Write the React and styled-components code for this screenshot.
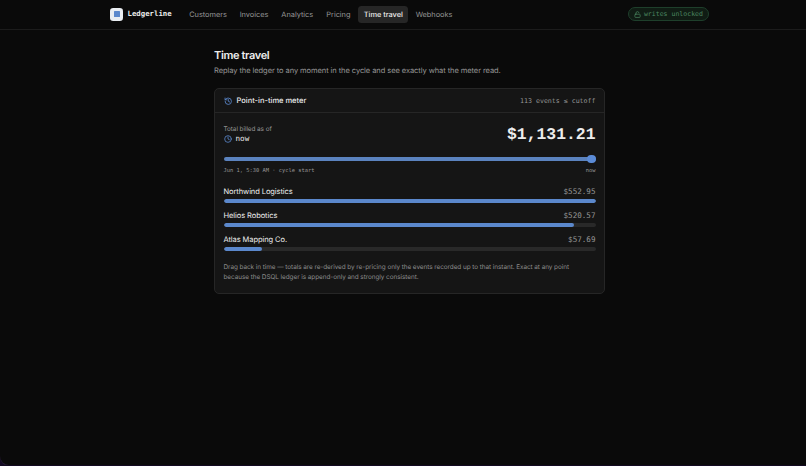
import React, { useState } from 'react'
import styled, { createGlobalStyle } from 'styled-components'
import { Clock, History, LockOpen } from 'lucide-react'

const links = [
  { name: 'Customers', width: 37.5 },
  { name: 'Invoices', width: 28.5 },
  { name: 'Analytics', width: 32 },
  { name: 'Pricing', width: 24.3 },
  { name: 'Time travel', width: 39.5 },
  { name: 'Webhooks', width: 36 },
]

const customers = [
  { name: 'Northwind Logistics', total: 552.95 },
  { name: 'Helios Robotics', total: 520.57 },
  { name: 'Atlas Mapping Co.', total: 57.69 },
]

const App = () => {
  const [active, setActive] = useState('Time travel')
  const max = Math.max(...customers.map((c) => c.total))

  return (
    <>
      <GlobalStyle />
      <Page>
        <Header>
          <Brand>
            <Logo><LogoMark /></Logo>
            <BrandName>Ledgerline</BrandName>
          </Brand>
          <Nav>
            {links.map((link) => (
              <NavLink key={link.name} $width={link.width} $active={active === link.name} onClick={() => setActive(link.name)}>
                {link.name}
              </NavLink>
            ))}
          </Nav>
          <Status>
            <LockOpen size={7} strokeWidth={2.4} />
            writes unlocked
          </Status>
        </Header>

        <Main>
          <Title>Time travel</Title>
          <Subtitle>Replay the ledger to any moment in the cycle and see exactly what the meter read.</Subtitle>

          <Card>
            <CardHeader>
              <CardTitle>
                <History size={8.5} strokeWidth={2.4} />
                Point-in-time meter
              </CardTitle>
              <EventCount>113 events ≤ cutoff</EventCount>
            </CardHeader>
            <CardBody>
              <Summary>
                <div>
                  <Label>Total billed as of</Label>
                  <Moment>
                    <Clock size={8} strokeWidth={2.4} />
                    now
                  </Moment>
                </div>
                <Total>$1,131.21</Total>
              </Summary>
              <Slider><Thumb /></Slider>
              <Range>
                <span>Jun 1, 5:30 AM · cycle start</span>
                <span>now</span>
              </Range>
              <List>
                {customers.map((c) => (
                  <li key={c.name}>
                    <Row>
                      <Name>{c.name}</Name>
                      <Amount>${c.total.toFixed(2)}</Amount>
                    </Row>
                    <Track>
                      <Fill style={{ width: `${(c.total / max) * 100}%` }} />
                    </Track>
                  </li>
                ))}
              </List>
              <Note>
                Drag back in time — totals are re-derived by re-pricing only the events recorded up to that instant. Exact at any point
                <br />
                because the DSQL ledger is append-only and strongly consistent.
              </Note>
            </CardBody>
          </Card>
        </Main>
      </Page>
    </>
  )
}

export default App

const mono = '"DejaVu Sans Mono", monospace'

const GlobalStyle = createGlobalStyle`
  * {
    box-sizing: border-box;
    margin: 0;
    padding: 0;
  }
  body {
    background: #130a22;
    color: #ededed;
    font-family: Inter, sans-serif;
    text-rendering: geometricPrecision;
    overflow: hidden;
  }
`

const Page = styled.div`
  height: 465px;
  background: #0a0a0a;
  border-bottom-left-radius: 9px;
  box-shadow: 0 1px 0 #241a30;
`

const Header = styled.header`
  display: flex;
  align-items: center;
  height: 30px;
  padding: 0 97px 1px 110px;
  border-bottom: 1px solid #1c1c1c;
`

const Brand = styled.div`
  display: flex;
  align-items: center;
  gap: 4.5px;
  width: 74px;
`

const Logo = styled.div`
  display: grid;
  place-items: center;
  width: 13px;
  height: 13px;
  border-radius: 3.2px;
  background: #e9edf2;
`

const LogoMark = styled.div`
  width: 6px;
  height: 6px;
  border-radius: 0.5px;
  background: #5b88cc;
`

const BrandName = styled.span`
  font: 700 7.35px/12px ${mono};
  color: #ededed;
`

const Nav = styled.nav`
  display: flex;
  gap: 2.5px;
`

const NavLink = styled.button`
  width: ${(p) => p.$width + 10.5}px;
  height: 17px;
  border: none;
  border-radius: 3.5px;
  background: ${(p) => (p.$active ? '#262626' : 'transparent')};
  color: ${(p) => (p.$active ? '#ededed' : '#969696')};
  font: ${(p) => (p.$active ? 500 : 400)} 7.4px/17px Inter, sans-serif;
  text-rendering: geometricPrecision;
  letter-spacing: -0.03px;
  white-space: nowrap;
  cursor: pointer;
`

const Status = styled.div`
  display: flex;
  align-items: center;
  gap: 3px;
  height: 14px;
  margin-left: auto;
  padding: 0 5px;
  border: 1px solid #1e3f2b;
  border-radius: 7px;
  background: #101c14;
  color: #4b8660;
  font: 6.55px/12px ${mono};
`

const Main = styled.main`
  width: 391px;
  margin-left: 214px;
  padding-top: 18px;
`

const Title = styled.h1`
  font-size: 11px;
  font-weight: 600;
  line-height: 14px;
  letter-spacing: -0.35px;
`

const Subtitle = styled.p`
  margin-top: 3px;
  color: #969696;
  font-size: 7.5px;
  line-height: 12px;
  letter-spacing: -0.07px;
`

const Card = styled.section`
  height: 206px;
  margin-top: 11px;
  border: 1px solid #262626;
  border-radius: 5px;
  background: #151515;
`

const CardHeader = styled.div`
  display: flex;
  align-items: center;
  justify-content: space-between;
  height: 24px;
  padding: 1px 8.5px 0;
  border-bottom: 1px solid #262626;
`

const CardTitle = styled.h2`
  display: flex;
  align-items: center;
  gap: 4.5px;
  font-size: 7.5px;
  font-weight: 500;
  line-height: 12px;

  svg {
    color: #5b88cc;
  }
`

const EventCount = styled.span`
  color: #969696;
  font: 6.6px/12px ${mono};
`

const CardBody = styled.div`
  padding: 11px 8.5px;
`

const Summary = styled.div`
  display: flex;
  justify-content: space-between;
  height: 32px;
`

const Label = styled.p`
  color: #969696;
  font-size: 6.4px;
  line-height: 10px;
  letter-spacing: -0.07px;
`

const Moment = styled.div`
  display: flex;
  align-items: center;
  gap: 4px;
  font: 7.6px/10px ${mono};

  svg {
    color: #5b88cc;
  }
`

const Total = styled.strong`
  font: 700 16.4px/22px "Liberation Mono", monospace;
`

const Slider = styled.div`
  display: flex;
  align-items: center;
  justify-content: flex-end;
  height: 4px;
  margin-top: 1px;
  border-radius: 2px;
  background: #5b83bf;
`

const Thumb = styled.div`
  width: 8.5px;
  height: 8.5px;
  border-radius: 50%;
  background: #5b8bd6;
`

const Range = styled.div`
  display: flex;
  justify-content: space-between;
  margin-top: 5px;
  color: #969696;
  font: 5.4px/10px ${mono};
`

const List = styled.ul`
  display: grid;
  gap: 6px;
  margin-top: 9px;
  list-style: none;
`

const Row = styled.div`
  display: flex;
  align-items: center;
  justify-content: space-between;
  height: 12px;
`

const Name = styled.span`
  font-size: 7.5px;
  letter-spacing: -0.08px;
`

const Amount = styled.span`
  padding-top: 1px;
  color: #969696;
  font: 7.6px/12px ${mono};
`

const Track = styled.div`
  height: 4px;
  margin-top: 2px;
  border-radius: 2px;
  background: #292929;
  overflow: hidden;
`

const Fill = styled.div`
  height: 100%;
  border-radius: 2px;
  background: #5b88cc;
`

const Note = styled.p`
  margin-top: 10.5px;
  color: #8c8c8c;
  font-size: 6.4px;
  line-height: 10.5px;
  letter-spacing: -0.055px;
  white-space: nowrap;
`
